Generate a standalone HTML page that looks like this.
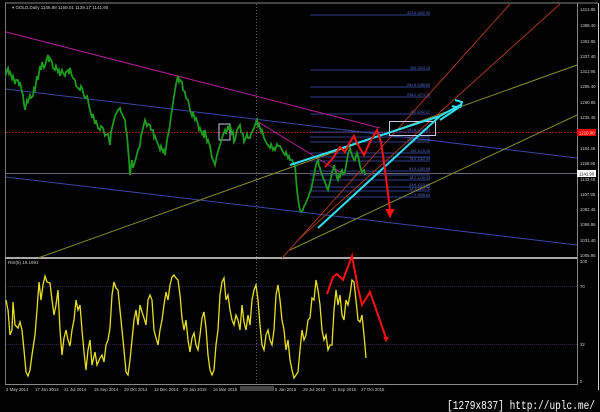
<!DOCTYPE html>
<html><head><meta charset="utf-8"><style>
html,body{margin:0;padding:0;background:#000;width:600px;height:412px;overflow:hidden}
svg{display:block}
text{font-family:"Liberation Sans",sans-serif}
text.wm{font-family:"Liberation Mono",monospace}
</style></head><body>
<svg width="600" height="412" viewBox="0 0 600 412" xmlns="http://www.w3.org/2000/svg">
<rect width="600" height="412" fill="#000"/>
<line x1="5" y1="3" x2="598" y2="3" stroke="#888" stroke-width="1"/>
<line x1="5.5" y1="3" x2="5.5" y2="385" stroke="#777"/>
<line x1="577.5" y1="3" x2="577.5" y2="385" stroke="#888"/>
<line x1="598.5" y1="3" x2="598.5" y2="390" stroke="#ccc"/>
<line x1="5" y1="258" x2="577" y2="258" stroke="#aaa" stroke-width="2"/>
<line x1="5" y1="384.5" x2="577" y2="384.5" stroke="#888"/>
<line x1="256.5" y1="4" x2="256.5" y2="384" stroke="#666" stroke-dasharray="1,2"/>
<text x="12" y="9" fill="#ccc" font-size="4.5">▾ GOLD,Daily  1146.88 1159.01 1139.17 1141.90</text>
<line x1="6" y1="132.5" x2="577" y2="132.5" stroke="#8b1a1a" stroke-dasharray="2,1"/>
<line x1="6" y1="173.5" x2="577" y2="173.5" stroke="#8a8a9a" stroke-width="0.8"/>
<line x1="6" y1="286.5" x2="577" y2="286.5" stroke="#3a1a4a" stroke-dasharray="1,1"/>
<line x1="6" y1="344.5" x2="577" y2="344.5" stroke="#3a1a4a" stroke-dasharray="1,1"/>
<g stroke="#34408a" stroke-width="0.9">
<line x1="310" y1="15" x2="430" y2="15"/><line x1="310" y1="70" x2="430" y2="70"/>
<line x1="310" y1="87" x2="430" y2="87"/><line x1="310" y1="97" x2="430" y2="97"/>
<line x1="310" y1="114" x2="430" y2="114"/><line x1="310" y1="132" x2="430" y2="132"/>
<line x1="310" y1="137" x2="430" y2="137"/><line x1="310" y1="142" x2="430" y2="142"/>
<line x1="310" y1="153" x2="430" y2="153"/><line x1="310" y1="157" x2="430" y2="157"/>
<line x1="310" y1="161" x2="430" y2="161"/><line x1="310" y1="171" x2="430" y2="171"/>
<line x1="310" y1="175" x2="430" y2="175"/><line x1="310" y1="180" x2="430" y2="180"/>
<line x1="310" y1="187" x2="430" y2="187"/><line x1="310" y1="191" x2="430" y2="191"/>
<line x1="310" y1="197" x2="430" y2="197"/>
</g>
<g fill="#5a6fd0" font-size="3.6" text-anchor="end">
<text x="430" y="14">423.6 1402.99</text><text x="430" y="69">300 1314.13</text>
<text x="430" y="86">261.8 1288.69</text><text x="430" y="96">238.2 1274.73</text>
<text x="430" y="113">200 1242.27</text><text x="430" y="131">161.8 1216.84</text>
<text x="430" y="141">138.2 1201.05</text><text x="430" y="152">100 1176.40</text>
<text x="430" y="160">78.6 1162.39</text><text x="430" y="170">61.8 1150.98</text>
<text x="430" y="179">38.2 1135.33</text><text x="430" y="186">23.6 1125.66</text>
<text x="430" y="190">14.6 1119.70</text><text x="430" y="196">0 1098.64</text>
</g>
<polyline points="6,32 380,128" fill="none" stroke="#b0209a" stroke-width="1"/>
<polyline points="255,120 345,175" fill="none" stroke="#b0209a" stroke-width="1"/>
<polyline points="6,89 577,158" fill="none" stroke="#3848a0" stroke-width="1"/>
<polyline points="6,177 577,245" fill="none" stroke="#3848a0" stroke-width="1"/>
<polyline points="38,258 577,65" fill="none" stroke="#8a8a30" stroke-width="1"/>
<polyline points="290,250 577,115" fill="none" stroke="#8a8a30" stroke-width="1"/>
<polyline points="282,258 510,4" fill="none" stroke="#a0381a" stroke-width="1"/>
<polyline points="298,240 560,4" fill="none" stroke="#a0381a" stroke-width="1"/>
<rect x="219" y="124" width="11" height="16" fill="none" stroke="#c8c8e8" stroke-width="1"/>
<rect x="389.5" y="121.5" width="46" height="14" fill="none" stroke="#c8c8e8" stroke-width="1"/>
<polyline fill="none" stroke="#1e9a1e" stroke-width="1.8" points="6,75 7,70 8,68 9,74 10,72 12,79 13,76 15,84 16,80 18,80 19,86 20,82 22,92 23,95 24,104 25,110 27,100 28,102 30,95 31,98 33,96 34,88 35,90 37,76 38,80 40,66 41,70 42,62 44,68 45,66 47,58 48,55 49,62 50,58 52,62 53,68 55,70 56,66 58,72 59,70 60,76 62,70 63,73 65,76 66,72 68,70 69,74 70,68 72,76 73,78 75,80 76,86 78,88 80,90 81,86 82,88 84,96 85,98 87,96 88,100 89,106 90,110 92,118 93,114 95,124 96,120 98,128 100,130 101,126 103,128 105,136 106,135 108,134 109,140 110,145 111,132 112,128 114,120 115,116 117,112 118,110 120,108 121,112 122,114 124,118 125,120 126,130 127,135 128,148 129,160 130,175 131,166 132,160 133,168 134,165 136,158 137,154 138,150 140,146 141,136 143,128 144,124 145,120 147,126 148,124 150,125 151,130 153,130 154,138 155,136 157,142 158,144 160,150 161,146 163,152 164,150 165,155 166,148 167,140 169,130 170,125 171,116 172,110 174,96 175,90 176,84 177,80 178,76 179,82 180,80 182,82 183,90 185,92 186,98 188,100 189,104 190,110 192,116 193,112 195,120 196,118 198,124 199,130 200,128 202,134 203,132 204,138 205,130 207,142 208,140 210,146 211,152 212,158 214,162 215,165 216,160 217,155 219,148 220,145 222,138 223,135 225,130 226,134 228,126 229,130 230,125 232,134 233,132 234,142 235,140 237,130 238,128 240,125 241,132 243,134 244,142 245,140 247,134 248,138 250,138 251,134 253,130 254,128 255,125 257,120 258,126 259,124 261,132 262,130 264,138 265,140 267,144 268,145 270,148 271,144 273,150 274,148 275,150 277,144 278,146 280,146 282,150 283,152 285,155 286,152 288,158 289,156 290,160 292,160 293,162 295,166 296,178 297,190 298,198 299,205 300,210 301,212 303,210 304,206 305,205 307,200 308,198 310,192 311,190 312,185 313,180 314,175 315,170 316,165 317,162 318,160 319,166 320,168 321,172 322,175 324,180 325,182 327,188 328,190 329,186 330,182 331,178 332,172 333,170 334,165 335,170 336,172 337,178 338,180 339,175 340,178 341,172 342,170 343,174 345,172 346,166 347,160 348,154 350,148 351,152 352,155 354,160 355,160 356,156 357,153 358,156 359,160 360,166 362,172 364,170 365,175"/>
<g stroke="#30e0f0" stroke-width="2" fill="none">
<line x1="290" y1="165" x2="440" y2="116"/>
<line x1="318" y1="228" x2="440" y2="116"/>
<polyline points="440,116 462,104"/><polyline points="440,120 458,108"/>
<polyline points="455,100 462,102 460,108"/><polyline points="452,106 459,108"/>
</g>
<g stroke="#ff1010" stroke-width="2" fill="none">
<polyline points="325,167 333,158 340,147 345,152 350,142 354,136 358,145 364,155 370,142 377,130 381,142 385,170 390,210"/>
<polygon points="387,210 393,210 390,216" fill="#ff1010"/>
</g>
<text x="8" y="264" fill="#ccc" font-size="4.5">RSI(5) 19.1991</text>
<polyline fill="none" stroke="#e8e020" stroke-width="1.3" points="6,300 8,310 10,335 12,330 13,302 15,325 18,328 20,322 22,330 24,350 26,372 28,376 30,370 32,355 35,335 37,310 39,282 41,300 43,285 45,276 47,282 50,283 52,300 54,315 56,305 58,290 60,330 62,355 64,338 66,330 68,340 70,346 72,330 74,320 76,300 78,310 80,305 82,330 84,352 86,370 88,350 90,340 92,365 95,352 97,365 100,358 102,355 104,362 106,345 108,340 110,328 112,295 114,282 116,288 118,290 120,310 122,330 124,350 126,372 128,375 130,360 132,340 134,320 136,310 138,325 140,305 142,312 144,318 146,325 148,300 150,295 152,300 154,330 156,338 158,345 160,330 162,320 164,305 166,292 168,300 170,285 172,277 174,275 176,278 178,280 180,295 182,318 184,330 186,320 188,340 190,352 192,338 194,333 196,345 198,350 200,335 202,318 204,312 206,328 208,355 210,370 212,375 214,370 216,345 218,330 220,295 222,282 224,278 226,300 228,295 230,310 232,320 234,325 236,315 238,320 240,330 242,305 244,322 246,330 248,315 250,325 252,300 254,290 256,285 258,300 260,325 262,345 264,350 266,335 268,330 270,340 272,345 274,330 276,295 278,285 280,300 282,320 284,330 286,350 288,340 290,360 292,370 294,378 296,375 298,372 300,350 302,330 304,340 306,335 308,320 310,318 312,298 314,300 316,280 318,290 320,305 322,330 324,340 326,335 328,350 330,345 332,345 334,310 336,290 338,305 340,295 342,315 344,320 346,300 348,305 350,295 352,280 354,282 356,300 358,320 360,322 362,315 364,335 366,358"/>
<polyline fill="none" stroke="#ff1010" stroke-width="2" points="327,294 333,277 337,274 343,280 352,256 358,288 362,305 370,292 386,338"/>
<polygon points="383,337 389,337 386,342" fill="#ff1010"/>
<g fill="#ccc" font-size="4.3">
<text x="580" y="11">1413.95</text><text x="580" y="27">1388.40</text><text x="580" y="43">1362.95</text>
<text x="580" y="58">1337.40</text><text x="580" y="73">1311.95</text><text x="580" y="88">1286.40</text>
<text x="580" y="104">1260.95</text><text x="580" y="119">1235.45</text><text x="580" y="150">1184.45</text>
<text x="580" y="165">1159.95</text><text x="580" y="181">1133.45</text><text x="580" y="196">1107.95</text>
<text x="580" y="211">1082.45</text><text x="580" y="226">1056.95</text><text x="580" y="242">1031.40</text>
<text x="580" y="257">1005.95</text>
<text x="580" y="263">100</text><text x="580" y="288">70</text><text x="580" y="346">32</text><text x="580" y="383">0</text>
</g>
<rect x="577" y="129" width="19" height="7" fill="#e00"/>
<text x="579" y="134.5" fill="#fff" font-size="4.3">1210.00</text>
<rect x="577" y="170" width="19" height="7" fill="#fff"/>
<text x="579" y="175.5" fill="#000" font-size="4.3">1141.90</text>
<g fill="#ccc" font-size="4.3">
<text x="6" y="391">2 May 2014</text><text x="35" y="391">17 Jan 2014</text><text x="64" y="391">31 Jul 2014</text>
<text x="94" y="391">15 Sep 2014</text><text x="124" y="391">29 Oct 2014</text><text x="154" y="391">12 Dec 2014</text>
<text x="183" y="391">29 Jan 2015</text><text x="213" y="391">16 Mar 2015</text><text x="275" y="391">5 Jan 2015</text>
<text x="303" y="391">29 Jul 2015</text><text x="332" y="391">11 Sep 2015</text><text x="361" y="391">27 Oct 2015</text>
</g>
<rect x="240" y="386" width="34" height="5" fill="#444"/>
<text class="wm" x="447" y="409" fill="#fff" font-size="12" textLength="148" lengthAdjust="spacingAndGlyphs">[1279x837] http://uplc.me/</text>
</svg>
</body></html>
